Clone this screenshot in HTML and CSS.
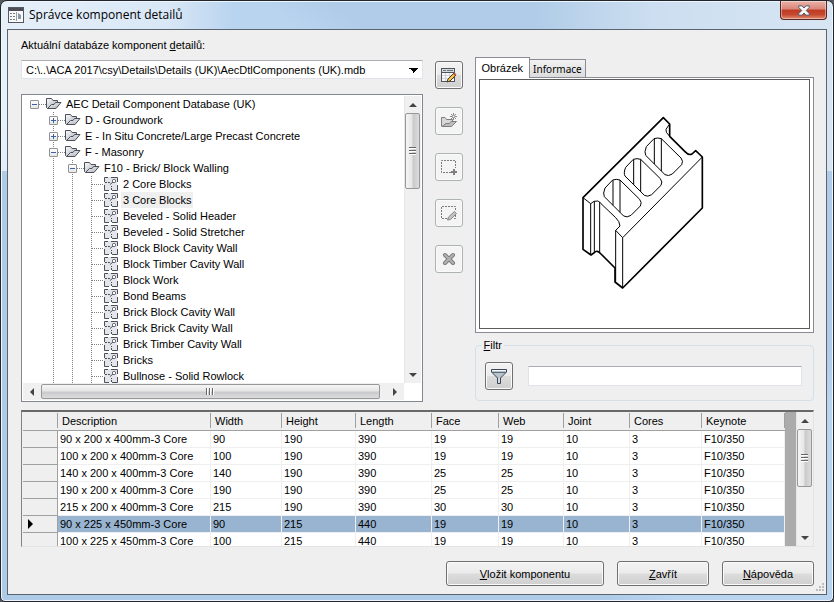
FILE: index.html
```html
<!DOCTYPE html>
<html lang="cs">
<head>
    <meta charset="UTF-8">
    <meta name="viewport" content="width=device-width, initial-scale=1.0">
    <title>Správce komponent detailů</title>
    <link rel="stylesheet" href="styles.css">
</head>
<body>
    <svg class="defs" aria-hidden="true">
        <defs>
            <linearGradient id="shade" x1="0" y1="0" x2="1" y2="1">
                <stop offset="0" stop-color="#fbfbfc"/>
                <stop offset="1" stop-color="#a9adb6"/>
            </linearGradient>
            <symbol id="folder" viewBox="0 0 16 16">
                <path d="M1.500 12.500L.5 11.500V2.500H5.500L7 4.500H11.500V6.500" fill="url(#shade)" stroke="#4a4f5a"/>
                <path d="M1.500 12.500L5.500 8.500H8L9.500 6.500H15L10 12.500Z" fill="url(#shade)" stroke="#4a4f5a"/>
            </symbol>
            <symbol id="detail" viewBox="0 0 16 16">
                <path d="M1 1H14V14H1Z" fill="#e3e5ea"/>
                <path d="M5 1.500H1.500V6M1.500 9V14.500H6M9 14.500H14.500V9M14.500 6V1.500H8" fill="none" stroke="#4a4f5a"/>
                <path d="M2 6.500H4M5 6.500H7M8.500 10V11M8.500 12V14M7 8.500L10 6" fill="none" stroke="#4a4f5a"/>
                <rect x="9.500" y="3.500" width="3" height="3" rx="1" fill="#fff" stroke="#4a4f5a"/>
            </symbol>
        </defs>
    </svg>

    <div class="window">
        <header class="titlebar">
            <svg class="app-icon" width="16" height="16" viewBox="0 0 16 16">
                <rect x=".5" y=".5" width="15" height="15" fill="#fafafa" stroke="#55585e"/>
                <rect x="1" y="1" width="14" height="3" fill="#4a4d53"/>
                <path d="M2 6.500H7M2 9.500H7M2 12.500H7" stroke="#777b83" stroke-dasharray="2 1"/>
                <path d="M8.500 5V14" stroke="#9a9da5"/>
                <path d="M10 6L13 8V12H10Z" fill="#8b98a5"/>
            </svg>
            <h1>Správce komponent detailů</h1>
            <button class="close" aria-label="Zavřít okno">
                <svg width="12" height="11" viewBox="0 0 12 11">
                    <path d="M.8 .8H4L6 3L8 .8H11.200V2.500L8.300 5.500L11.200 8.500V10.200H8L6 8L4 10.200H.8V8.500L3.700 5.500L.8 2.500Z" fill="#f6f6f6" stroke="#545a6b"/>
                </svg>
            </button>
        </header>

        <div class="client">
            <main class="panels">
                <section class="left">
                    <label for="database">Aktuální databáze komponent <u>d</u>etailů:</label>
                    <select id="database" class="combo">
                        <option>C:\..\ACA 2017\csy\Details\Details (UK)\AecDtlComponents (UK).mdb</option>
                    </select>
                    <div class="tree-box">
                        <ul class="tree">
                            <li>
                                <div class="row"><span class="twig"><button class="toggle minus" aria-label="Sbalit"></button></span><svg class="ico"><use href="#folder"/></svg><span class="name">AEC Detail Component Database (UK)</span></div>
                                <ul>
                                    <li><div class="row"><span class="twig"><button class="toggle plus" aria-label="Rozbalit"></button></span><svg class="ico"><use href="#folder"/></svg><span class="name">D - Groundwork</span></div></li>
                                    <li><div class="row"><span class="twig"><button class="toggle plus" aria-label="Rozbalit"></button></span><svg class="ico"><use href="#folder"/></svg><span class="name">E - In Situ Concrete/Large Precast Concrete</span></div></li>
                                    <li>
                                        <div class="row"><span class="twig"><button class="toggle minus" aria-label="Sbalit"></button></span><svg class="ico"><use href="#folder"/></svg><span class="name">F - Masonry</span></div>
                                        <ul>
                                            <li>
                                                <div class="row"><span class="twig"><button class="toggle minus" aria-label="Sbalit"></button></span><svg class="ico"><use href="#folder"/></svg><span class="name">F10 - Brick/ Block Walling</span></div>
                                                <ul>
                                                    <li class="row"><span class="twig"></span><svg class="ico"><use href="#detail"/></svg><span class="name">2 Core Blocks</span></li>
                                                    <li class="row"><span class="twig"></span><svg class="ico"><use href="#detail"/></svg><span class="name selected">3 Core Blocks</span></li>
                                                    <li class="row"><span class="twig"></span><svg class="ico"><use href="#detail"/></svg><span class="name">Beveled - Solid Header</span></li>
                                                    <li class="row"><span class="twig"></span><svg class="ico"><use href="#detail"/></svg><span class="name">Beveled - Solid Stretcher</span></li>
                                                    <li class="row"><span class="twig"></span><svg class="ico"><use href="#detail"/></svg><span class="name">Block Block Cavity Wall</span></li>
                                                    <li class="row"><span class="twig"></span><svg class="ico"><use href="#detail"/></svg><span class="name">Block Timber Cavity Wall</span></li>
                                                    <li class="row"><span class="twig"></span><svg class="ico"><use href="#detail"/></svg><span class="name">Block Work</span></li>
                                                    <li class="row"><span class="twig"></span><svg class="ico"><use href="#detail"/></svg><span class="name">Bond Beams</span></li>
                                                    <li class="row"><span class="twig"></span><svg class="ico"><use href="#detail"/></svg><span class="name">Brick Block Cavity Wall</span></li>
                                                    <li class="row"><span class="twig"></span><svg class="ico"><use href="#detail"/></svg><span class="name">Brick Brick Cavity Wall</span></li>
                                                    <li class="row"><span class="twig"></span><svg class="ico"><use href="#detail"/></svg><span class="name">Brick Timber Cavity Wall</span></li>
                                                    <li class="row"><span class="twig"></span><svg class="ico"><use href="#detail"/></svg><span class="name">Bricks</span></li>
                                                    <li class="row"><span class="twig"></span><svg class="ico"><use href="#detail"/></svg><span class="name">Bullnose - Solid Rowlock</span></li>
                                                </ul>
                                            </li>
                                        </ul>
                                    </li>
                                </ul>
                            </li>
                        </ul>
                        <div class="vscroll">
                            <span class="arrow up"></span>
                            <span class="thumb tree-thumb"></span>
                            <span class="arrow down"></span>
                        </div>
                        <div class="hscroll">
                            <span class="arrow prev"></span>
                            <span class="thumb"></span>
                            <span class="arrow next"></span>
                        </div>
                    </div>
                </section>

                <div class="tools">
                    <button class="tool" aria-label="Upravit databázi">
                        <svg width="18" height="18" viewBox="0 0 18 18">
                            <rect x="1.500" y="2.500" width="13" height="13" fill="#f7f9fb" stroke="#50545d"/>
                            <path d="M2 3H14V6H2Z" fill="#d5d9df"/>
                            <path d="M2 6.500H14" stroke="#50545d"/>
                            <path d="M3 4.500H6M7 4.500H13" stroke="#6c7480"/>
                            <path d="M2 9.500H14M2 12.500H14M5.500 7V15M9.500 7V15" stroke="#cdd3da"/>
                            <path d="M7 16L8 13L14 7L16 9L10 15Z" fill="#f5c453" stroke="#4b3a20"/>
                            <path d="M13 8L14.500 6.500L16.500 8.500L15 10Z" fill="#b65b3d"/>
                        </svg>
                    </button>
                    <button class="tool" disabled aria-label="Přidat skupinu">
                        <svg width="18" height="18" viewBox="0 0 18 18">
                            <path d="M1.500 14.500V5.500H5L6.500 7.500H12.500V9" fill="#d8d8d8" stroke="#7f7f7f"/>
                            <path d="M2 14.500L6 11.500H9.500L11 9.500H16.500L11.500 14.500Z" fill="#bdbdbd" stroke="#7f7f7f"/>
                            <path d="M13.500 1V8M10 4.500H17M11 2L16 7M16 2L11 7" stroke="#8b8b8b"/>
                            <circle cx="13.500" cy="4.500" r="1" fill="#f4f4f4"/>
                        </svg>
                    </button>
                    <button class="tool" disabled aria-label="Přidat komponentu">
                        <svg width="18" height="18" viewBox="0 0 18 18">
                            <path d="M11 14.500H1.500V2.500H15.500V10" fill="none" stroke="#7c7c7c" stroke-dasharray="2 1"/>
                            <path d="M14 11V17M11 14H17" stroke="#808080" stroke-width="2"/>
                        </svg>
                    </button>
                    <button class="tool" disabled aria-label="Upravit">
                        <svg width="18" height="18" viewBox="0 0 18 18">
                            <path d="M7 14.500H1.500V2.500H15.500V6M15.500 11V14.500H13" fill="none" stroke="#7c7c7c" stroke-dasharray="2 1"/>
                            <path d="M7.500 16L8.500 13L14.500 7.500L16.500 9.500L10.500 15.500Z" fill="#c4c4c4" stroke="#858585"/>
                        </svg>
                    </button>
                    <button class="tool" disabled aria-label="Odstranit">
                        <svg width="18" height="18" viewBox="0 0 18 18">
                            <path d="M5 5L13 13M13 5L5 13" stroke="#7c7c7c" stroke-width="4" stroke-linecap="round"/>
                            <path d="M5 5L13 13M13 5L5 13" stroke="#b3b3b3" stroke-width="2" stroke-linecap="round"/>
                        </svg>
                    </button>
                </div>

                <section class="right">
                    <div class="tabs" role="tablist">
                        <button class="tab active" role="tab" aria-selected="true">Obrázek</button>
                        <button class="tab" role="tab" aria-selected="false">Informace</button>
                    </div>
                    <div class="pane" role="tabpanel">
                        <div class="preview">
                            <svg width="150" height="200" viewBox="0 0 450 600" fill="none" stroke="#000">
                                <g stroke-width="3">
                                    <path d="M42 281L65 299Q75 289 86 291Q92 292 96 299L140 341Q152 352 153 366L140 379L161 401L400 159"/>
                                    <path d="M65 299V453M76 292V446M92 294V446M140 379V534M161 401V552"/>
                                    <path d="M302 60L291 76Q288 84 302 97"/>
                                    <g id="core">
                                        <path d="M255 104Q266 100 277 104L336 162Q344 172 338 182L310 210Q298 218 288 212L230 154Q225 145 232 128Z"/>
                                        <path d="M256 104V180M277 104V201"/>
                                    </g>
                                    <use href="#core" x="-62" y="62"/>
                                    <use href="#core" x="-124" y="124"/>
                                </g>
                                <path stroke-width="5" stroke-linejoin="round" d="M42 281L283 41L302 60V97L348 143Q359 155 369 150L380 140L400 159V312L161 552L138 534V492L96 450Q84 436 76 446L66 453L42 436Z"/>
                            </svg>
                        </div>
                    </div>
                    <fieldset class="filter">
                        <legend><u>F</u>iltr</legend>
                        <div class="filter-row">
                            <button class="tool" aria-label="Použít filtr">
                                <svg width="18" height="18" viewBox="0 0 18 18">
                                    <path d="M1.500 2.500H16.500V5L10.500 11V16.500H7.500V11L1.500 5Z" fill="#b9c3cc" stroke="#3c4654"/>
                                    <path d="M2 3.500H16" stroke="#f2f6f9"/>
                                    <path d="M2 5.500H16" stroke="#5d6875"/>
                                    <path d="M9 11V16" stroke="#eef2f5"/>
                                </svg>
                            </button>
                            <input type="text" aria-label="Filtr">
                        </div>
                    </fieldset>
                </section>
            </main>

            <section class="grid-box">
                <div class="grid">
                    <table>
                        <colgroup>
                            <col class="c-head"><col class="c-desc"><col class="c-width"><col class="c-height"><col class="c-length">
                            <col class="c-face"><col class="c-web"><col class="c-joint"><col class="c-cores"><col class="c-key">
                        </colgroup>
                        <thead>
                            <tr><th></th><th>Description</th><th>Width</th><th>Height</th><th>Length</th><th>Face</th><th>Web</th><th>Joint</th><th>Cores</th><th>Keynote</th></tr>
                        </thead>
                        <tbody>
                            <tr><th></th><td>90 x 200 x 400mm-3 Core</td><td>90</td><td>190</td><td>390</td><td>19</td><td>19</td><td>10</td><td>3</td><td>F10/350</td></tr>
                            <tr><th></th><td>100 x 200 x 400mm-3 Core</td><td>100</td><td>190</td><td>390</td><td>19</td><td>19</td><td>10</td><td>3</td><td>F10/350</td></tr>
                            <tr><th></th><td>140 x 200 x 400mm-3 Core</td><td>140</td><td>190</td><td>390</td><td>25</td><td>25</td><td>10</td><td>3</td><td>F10/350</td></tr>
                            <tr><th></th><td>190 x 200 x 400mm-3 Core</td><td>190</td><td>190</td><td>390</td><td>25</td><td>25</td><td>10</td><td>3</td><td>F10/350</td></tr>
                            <tr><th></th><td>215 x 200 x 400mm-3 Core</td><td>215</td><td>190</td><td>390</td><td>30</td><td>30</td><td>10</td><td>3</td><td>F10/350</td></tr>
                            <tr class="current"><th><span class="marker"></span></th><td>90 x 225 x 450mm-3 Core</td><td>90</td><td>215</td><td>440</td><td>19</td><td>19</td><td>10</td><td>3</td><td>F10/350</td></tr>
                            <tr><th></th><td>100 x 225 x 450mm-3 Core</td><td>100</td><td>215</td><td>440</td><td>19</td><td>19</td><td>10</td><td>3</td><td>F10/350</td></tr>
                        </tbody>
                    </table>
                </div>
                <div class="vscroll">
                    <span class="arrow up"></span>
                    <span class="thumb grid-thumb"></span>
                    <span class="arrow down"></span>
                </div>
            </section>

            <footer class="actions">
                <button class="btn wide"><u>V</u>ložit komponentu</button>
                <button class="btn"><u>Z</u>avřít</button>
                <button class="btn"><u>N</u>ápověda</button>
            </footer>
            <svg class="grip" width="10" height="10" viewBox="0 0 10 10">
                <path d="M7 0h2v2h-2zM4 3h2v2h-2zM7 3h2v2h-2zM1 6h2v2h-2zM4 6h2v2h-2zM7 6h2v2h-2z" fill="#bcbcbc"/>
            </svg>
        </div>
    </div>
</body>
</html>
```
FILE: styles.css
```css
* { margin: 0; padding: 0; box-sizing: border-box; }
body { font: 11px/16px "Liberation Sans", Arial, sans-serif; color: #000; background: #55585e; }
button, input, select { font: inherit; color: inherit; }
ul { list-style: none; }
.defs { position: absolute; width: 0; height: 0; }

/* window frame */
.window {
    display: flex; flex-direction: column; min-height: 100vh; padding: 0 6px 6px;
    border: 1px solid #22252b; border-radius: 7px 7px 5px 5px;
    background:
        linear-gradient(90deg, rgba(255,255,255,.65), rgba(255,255,255,.45) 20%, transparent 28%, transparent 64%, rgba(255,255,255,.35) 78%, rgba(255,255,255,.5)) 0 0 / 100% 170px no-repeat,
        linear-gradient(215deg, #b0cce8 0 30%, #b9d4ef 34% 60%, #adcae7 64%);
    box-shadow: inset 0 0 0 1px #eef6fd;
}
.titlebar { display: flex; align-items: center; gap: 5px; height: 28px; flex: none; padding-left: 1px; }
.titlebar h1 { flex: 1; font: 12px/16px "Open Sans", "Noto Sans", sans-serif; }
.close {
    align-self: flex-start; display: flex; align-items: center; justify-content: center;
    width: 47px; height: 19px; border: 1px solid #5a2525; border-top: 0; border-radius: 0 0 4px 4px;
    background: linear-gradient(#eab3a8, #d98577 45%, #c03a22 50%, #c4482f 75%, #e08a6c);
    box-shadow: inset 0 0 0 1px rgba(255,255,255,.4);
}
.client {
    position: relative; flex: 1; display: flex; flex-direction: column;
    padding: 7px 12px 8px 13px; background: #efefef; border: 1px solid #5a6470;
}

.panels { flex: 1; display: grid; grid-template-columns: 401fr 28px 339fr; column-gap: 12px; }
.left, .right { display: flex; flex-direction: column; min-width: 0; }

.combo {
    width: 100%; height: 19px; margin: 7px 0 15px; padding: 0 4px;
    appearance: none; border: 1px solid #e2e3ea; border-top-color: #abadb3; border-radius: 0;
    background:
        linear-gradient(to bottom left, #000 50%, transparent 50%) right 8px top 7px / 5px 5px no-repeat,
        linear-gradient(to bottom right, #000 50%, transparent 50%) right 3px top 7px / 5px 5px no-repeat,
        #fff;
}

/* component tree */
.tree-box {
    flex: 1; display: grid; grid-template: minmax(0, 1fr) 17px / minmax(0, 1fr) 17px;
    padding: 1px; border: 1px solid #828790; background: #fff;
}
.tree { height: 287px; overflow: hidden; padding-left: 2px; }
.tree ul {
    margin-left: 19px;
    background: repeating-linear-gradient(#808080 0 1px, transparent 1px 2px) 9px 0 / 1px 100% no-repeat;
}
.row { display: flex; align-items: center; height: 16px; white-space: nowrap; }
.twig {
    display: flex; align-items: center; width: 21px; height: 16px; padding-left: 5px;
    background: repeating-linear-gradient(90deg, #808080 0 1px, transparent 1px 2px) 10px 8px / 11px 1px no-repeat;
}
.toggle {
    width: 9px; height: 9px; border: 1px solid #919191; border-radius: 1px;
    background: linear-gradient(#3f5fa8, #3f5fa8) 1px 3px / 5px 1px no-repeat, linear-gradient(#fff, #e6e6e6);
}
.toggle.plus {
    background: linear-gradient(#3f5fa8, #3f5fa8) 1px 3px / 5px 1px no-repeat,
        linear-gradient(#3f5fa8, #3f5fa8) 3px 1px / 1px 5px no-repeat, linear-gradient(#fff, #e6e6e6);
}
.ico { width: 16px; height: 16px; margin-right: 2px; }
.name { padding: 0 2px; }
.name.selected { background: #efefef; }

/* scroll bars */
.vscroll { display: flex; flex-direction: column; width: 17px; background: #f0f0f0; border-left: 1px solid #e6e6e6; }
.hscroll { display: flex; background: #f0f0f0; }
.arrow { flex: none; display: flex; align-items: center; justify-content: center; width: 16px; height: 17px; }
.arrow::before { content: ""; border: 4px solid transparent; }
.up::before { border-top: 0; border-bottom-color: #444; }
.down::before { border-bottom: 0; border-top-color: #444; }
.prev::before { border-left: 0; border-right-color: #444; }
.next::before { border-right: 0; border-left-color: #444; }
.down { margin-top: auto; }
.hscroll .arrow { width: 18px; }
.hscroll .next { margin-left: 6px; }
.thumb { display: flex; align-items: center; justify-content: center; border: 1px solid #979797; border-radius: 2px; }
.vscroll .thumb { width: 15px; background: linear-gradient(90deg, #f5f5f5, #e6e6e6 45%, #c9cacc 55%, #dcdcdd); }
.vscroll .thumb::before { content: ""; width: 7px; height: 8px; background: repeating-linear-gradient(#666 0 1px, #fff 1px 2px, transparent 2px 3px); }
.hscroll .thumb { flex: 1; margin: 1px 0; background: linear-gradient(#f5f5f5, #e6e6e6 45%, #c9cacc 55%, #dcdcdd); }
.hscroll .thumb::before { content: ""; width: 8px; height: 7px; background: repeating-linear-gradient(90deg, #666 0 1px, #fff 1px 2px, transparent 2px 3px); }
.tree-thumb { height: 76px; }
.grid-thumb { height: 58px; }

/* tool buttons */
.tools { display: flex; flex-direction: column; gap: 18px; padding-top: 24px; }
.tool, .btn {
    border: 1px solid #707070; border-radius: 3px;
    background: linear-gradient(#f3f3f3, #ebebeb 48%, #dcdcdc 52%, #cfcfcf);
    box-shadow: inset 0 0 0 1px #fafafa;
}
.tool { display: flex; align-items: center; justify-content: center; width: 28px; height: 28px; }
.tool:disabled { background: #f4f4f4; border-color: #adb2b5; }

/* tabs and preview */
.tabs { display: flex; align-items: flex-end; height: 20px; margin-top: 20px; }
.tab { height: 18px; padding: 0 3px; border: 1px solid #898c95; border-bottom: 0; background: linear-gradient(#f2f2f2, #dcdcdc); }
.tab + .tab { margin-left: -1px; font: 10px/16px "Noto Sans", sans-serif; }
.tab.active { height: 21px; margin-bottom: -1px; padding: 0 6px; background: #fff; z-index: 1; }
.pane { flex: 1; display: flex; padding: 1px 3px 3px; border: 1px solid #898c95; background: #fff; }
.preview { flex: 1; display: flex; align-items: center; justify-content: center; border: 1px solid #5c5c5c; }

.filter { margin: 5px 0 1px; padding: 10px 11px 10px 9px; border: 1px solid #d5dfe8; border-radius: 4px; }
.filter legend { height: 14px; padding: 0 2px; line-height: 14px; margin-left: -3px; }
.filter-row { display: flex; align-items: center; gap: 15px; }
.filter input { flex: 1; min-width: 0; height: 20px; padding: 0 4px; border: 1px solid #e2e3ea; border-top-color: #abadb3; background: #fff; }

/* component sizes */
.grid-box { display: flex; margin-top: 8px; height: 137px; padding-left: 1px; border: 1px solid #828282; border-top: 2px solid #696969; border-right-color: #e3e3e3; border-bottom-color: #e3e3e3; }
.grid { flex: 1; min-width: 0; overflow: hidden; padding-right: 11px; background: #ababab; }
table { width: 100%; table-layout: fixed; border-collapse: separate; border-spacing: 0; background: #fff; }
.c-head { width: 35px; }
.c-desc { width: 153px; }
.c-width { width: 71px; }
.c-height { width: 74px; }
.c-length { width: 76px; }
.c-face { width: 67px; }
.c-web { width: 65px; }
.c-joint { width: 66px; }
.c-cores { width: 72px; }
.c-key { width: 83px; }
th { font-weight: normal; text-align: left; background: #efefef; border-bottom: 1px solid #a0a0a0; }
thead th {
    height: 19px; padding-left: 4px; line-height: 18px;
    background: linear-gradient(#a0a0a0, #a0a0a0) right 1px / 1px 15px no-repeat, #efefef;
}
tbody th { border-right: 1px solid #a0a0a0; }
td { height: 17px; padding-left: 2px; white-space: nowrap; border-right: 1px solid #efefef; border-bottom: 1px solid #efefef; }
.current td { background: #99b4d1; }
.marker { display: block; margin-left: 5px; width: 0; border: 5px solid transparent; border-left-color: #000; border-right: 0; }

/* bottom buttons */
.actions { display: flex; justify-content: flex-end; gap: 13px; margin-top: 14px; }
.btn { width: 92px; height: 25px; }
.btn.wide { width: 158px; }
.grip { position: absolute; right: 1px; bottom: 1px; }
```
